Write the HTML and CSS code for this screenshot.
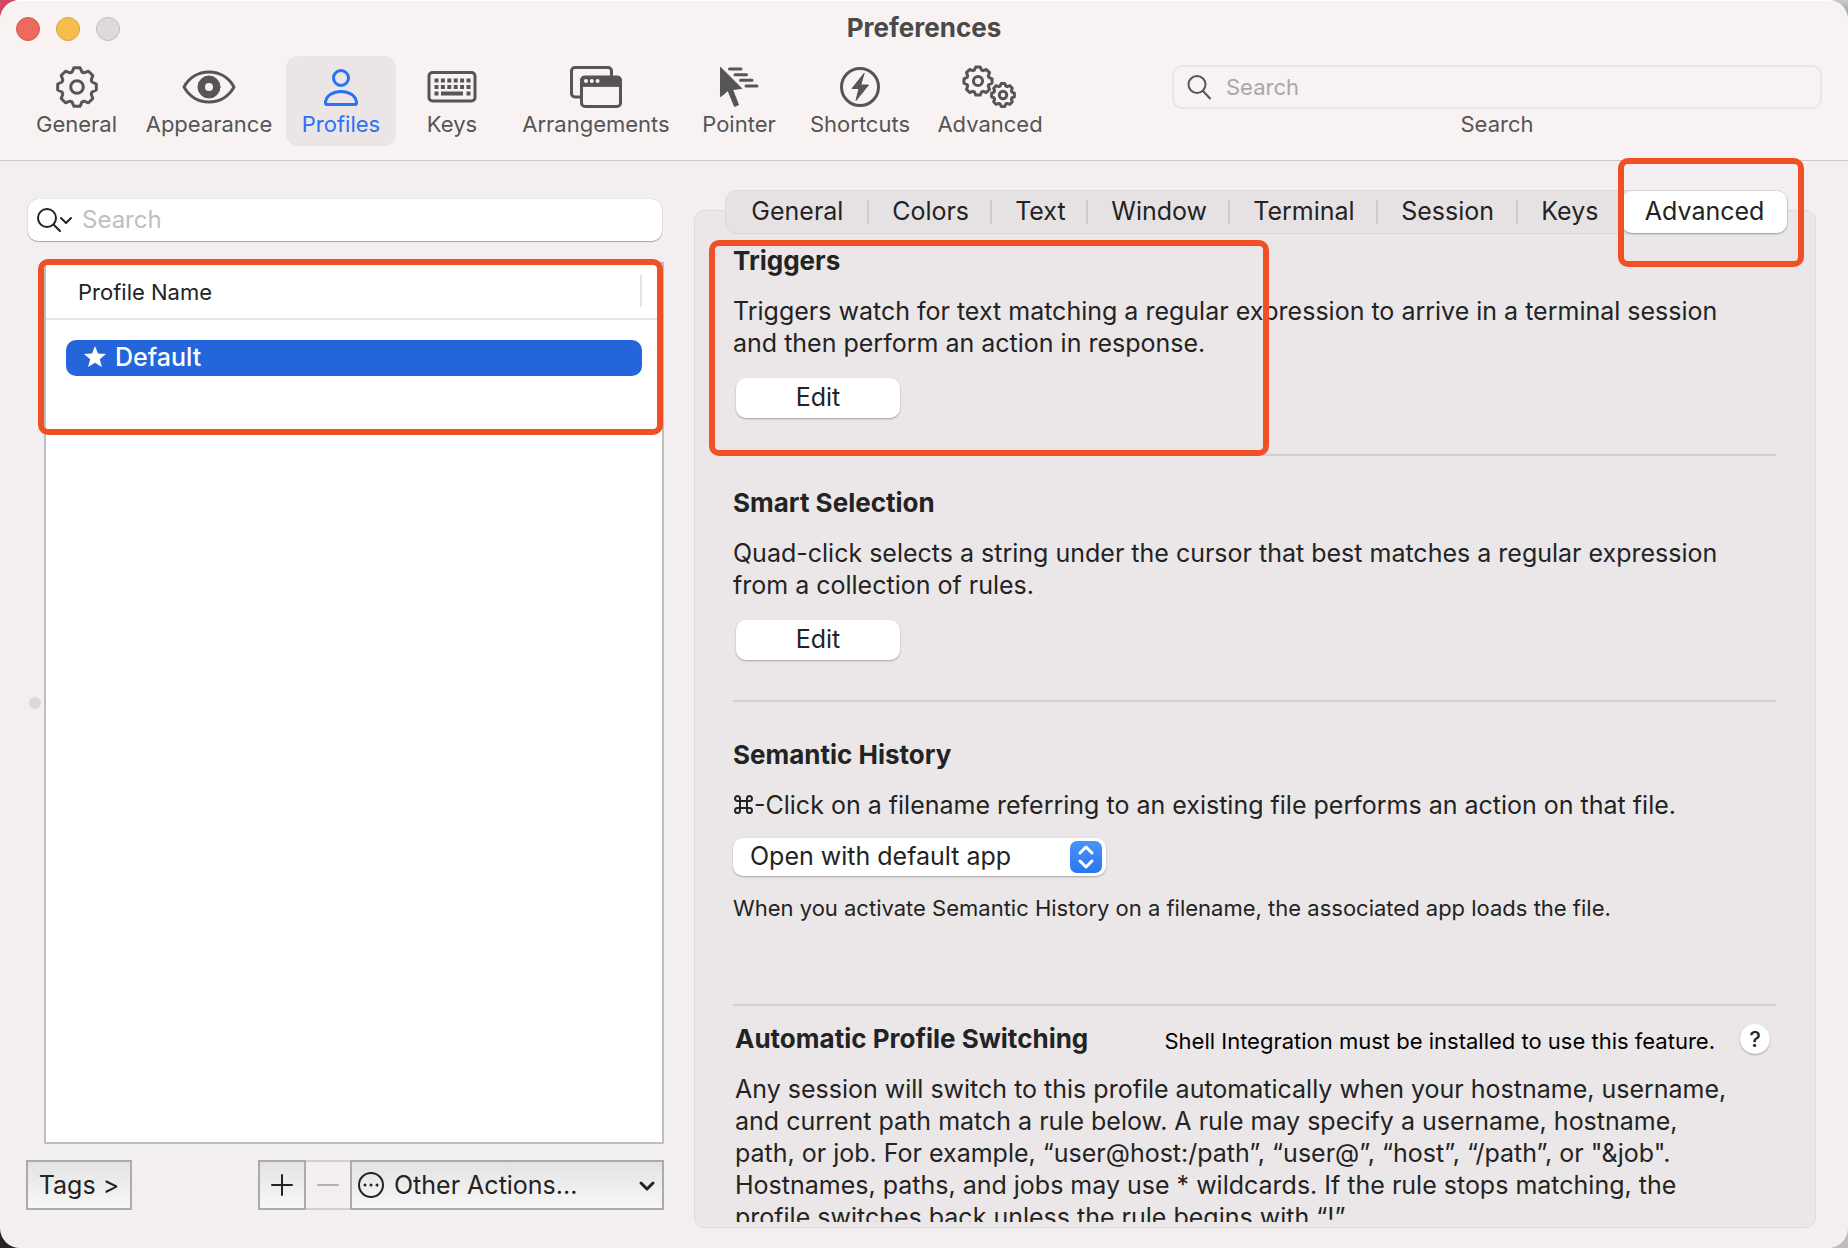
FILE: index.html
```html
<!DOCTYPE html>
<html lang="en">
<head>
<meta charset="utf-8">
<title>Preferences</title>
<link rel="stylesheet" href="styles.css">
</head>
<body>
<svg class="defs" aria-hidden="true">
  <symbol id="gear" viewBox="-22 -22 44 44" overflow="visible">
    <path vector-effect="non-scaling-stroke" d="M-5-15L-3-19.3H3L5-15L7-14.2L11.5-15.8L15.8-11.5L14.2-7L15-5L19.3-3V3L15 5L14.2 7L15.8 11.5L11.5 15.8L7 14.2L5 15L3 19.3H-3L-5 15L-7 14.2L-11.5 15.8L-15.8 11.5L-14.2 7L-15 5L-19.3 3V-3L-15-5L-14.2-7L-15.8-11.5L-11.5-15.8L-7-14.2Z"/>
    <circle vector-effect="non-scaling-stroke" r="6.3"/>
  </symbol>
</svg>
<div class="window">
  <header class="toolbar">
    <div class="titlebar">
      <div class="lights">
        <button class="light close" aria-label="Close"></button>
        <button class="light minimize" aria-label="Minimize"></button>
        <button class="light zoom" aria-label="Zoom" disabled></button>
      </div>
      <h1>Preferences</h1>
    </div>
    <div class="tools">
      <nav class="sections">
        <button class="section">
          <svg class="line" width="44" height="44"><use href="#gear" width="44" height="44"/></svg>
          General
        </button>
        <button class="section">
          <svg class="line" width="56" height="44" viewBox="0 0 56 44"><path d="M3 22C8 13 17 7 28 7s20 6 25 15c-5 9-14 15-25 15S8 31 3 22Z"/><circle class="solid" cx="28" cy="22" r="11"/><circle class="hole" cx="28" cy="22" r="4"/></svg>
          Appearance
        </button>
        <button class="section selected">
          <svg class="line" width="44" height="44" viewBox="0 0 44 44"><circle cx="22" cy="13" r="7.5"/><path d="M8 39.500C6.500 39.500 6.300 38.500 6.500 37C7.500 30.500 14 26.500 22 26.500S36.500 30.500 37.500 37C37.700 38.500 37.500 39.500 36 39.500Z"/></svg>
          Profiles
        </button>
        <button class="section">
          <svg class="line" width="52" height="44" viewBox="0 0 52 44"><rect x="3" y="7.500" width="46" height="28.500" rx="3.500"/><g class="keys"><path d="M8.500 15.500h36M8.500 22h36"/><path class="space" d="M8.500 28.500h4m2.500 0h22m3.500 0h4"/></g></svg>
          Keys
        </button>
        <button class="section">
          <svg class="line" width="54" height="44" viewBox="0 0 54 44"><path d="M11 32H6c-2 0-3.500-1.500-3.500-3.500V6c0-2 1.500-3.500 3.500-3.500h33c2 0 3.500 1.500 3.500 3.500v4"/><rect x="12.500" y="12.500" width="39" height="29" rx="3.500"/><path class="solid" d="M11.500 21v-5.500c0-3 1.500-4.500 4.500-4.500h32c3 0 4.500 1.500 4.500 4.500V21Z"/><g class="hole"><circle cx="17" cy="16" r="2"/><circle cx="22.800" cy="16" r="2"/><circle cx="28.600" cy="16" r="2"/></g></svg>
          Arrangements
        </button>
        <button class="section">
          <svg class="line" width="44" height="44" viewBox="0 0 44 44"><path class="solid" d="M3.800 2.500L24.800 23.500L15.500 24.500L21.500 39.800L17.500 41.500L11 25.500L3.800 31.500Z"/><path d="M12.500 4H24M18 9.700H29.500M23.500 15.300H35M29 21H40"/></svg>
          Pointer
        </button>
        <button class="section">
          <svg class="line" width="44" height="44" viewBox="0 0 44 44"><circle cx="22" cy="22" r="18.500"/><path class="solid" d="M26 8.500L14 23.500H21L18 35.500L30.500 20H23Z"/></svg>
          Shortcuts
        </button>
        <button class="section">
          <svg class="line" width="56" height="44" viewBox="0 0 56 44"><use href="#gear" x="0" y="0" width="32" height="32"/><use href="#gear" x="28" y="17" width="26" height="26"/></svg>
          Advanced
        </button>
      </nav>
      <div class="find">
        <div class="field">
          <svg width="26" height="26" viewBox="0 0 26 26"><circle cx="10" cy="10.500" r="8.500"/><path d="M16 17L23 24.500"/></svg>
          <input id="find" type="search" placeholder="Search">
        </div>
        <label for="find">Search</label>
      </div>
    </div>
  </header>

  <main class="content">
    <aside class="sidebar">
      <div class="filter">
        <svg width="38" height="28" viewBox="0 0 38 28"><circle cx="11" cy="12" r="9"/><path d="M17.500 18.500L24 25M25 12l5 5 5-5"/></svg>
        <input type="search" placeholder="Search" aria-label="Filter profiles">
      </div>
      <div class="list">
        <table>
          <thead><tr><th scope="col">Profile Name</th></tr></thead>
          <tbody><tr><td><div class="profile">
            <svg width="26" height="26" viewBox="0 0 26 26"><path d="M13 2l3 7.500 8 .6-6.200 5.200L19.900 23 13 18.700 6.100 23l2.100-7.700L2 10.100l8-.6Z"/></svg>
            Default
          </div></td></tr></tbody>
        </table>
        <div class="mark mark-list"></div>
        <div class="handle"></div>
      </div>
      <div class="actions">
        <button class="tags">Tags &gt;</button>
        <div class="group">
          <button aria-label="Add profile"><svg width="24" height="24" viewBox="0 0 24 24"><path d="M12 2v20M2 12h20"/></svg></button>
          <button aria-label="Remove profile" disabled><svg width="24" height="24" viewBox="0 0 24 24"><path d="M2 12h20"/></svg></button>
          <div class="other">
            <svg class="more" width="28" height="28" viewBox="0 0 28 28"><circle cx="14" cy="14" r="12"/><path d="M8 14h.01M14 14h.01M20 14h.01"/></svg>
            <select aria-label="Other actions"><option>Other Actions...</option></select>
            <svg class="arrow" width="18" height="14" viewBox="0 0 18 14"><path d="M3 4l6 6 6-6"/></svg>
          </div>
        </div>
      </div>
    </aside>

    <section class="panel">
      <nav class="tabs">
        <button>General</button>
        <button>Colors</button>
        <button>Text</button>
        <button>Window</button>
        <button>Terminal</button>
        <button>Session</button>
        <button>Keys</button>
        <button class="active">Advanced</button>
        <div class="mark mark-tab"></div>
      </nav>
      <div class="settings">
        <section class="block triggers">
          <h2>Triggers</h2>
          <p>Triggers watch for text matching a regular expression to arrive in a terminal session and then perform an action in response.</p>
          <button class="edit">Edit</button>
          <div class="mark mark-triggers"></div>
        </section>
        <section class="block smart">
          <h2>Smart Selection</h2>
          <p>Quad-click selects a string under the cursor that best matches a regular expression from a collection of rules.</p>
          <button class="edit">Edit</button>
        </section>
        <section class="block history">
          <h2>Semantic History</h2>
          <p><svg class="cmd" width="21" height="21" viewBox="0 0 21 21" role="img" aria-label="Command"><path d="M7 7h7v7H7ZM7 7H4.500A2.500 2.500 0 1 1 7 4.500ZM14 7V4.500A2.500 2.500 0 1 1 16.500 7ZM14 14h2.500A2.500 2.500 0 1 1 14 16.500ZM7 14v2.500A2.500 2.500 0 1 1 4.500 14Z"/></svg>-Click on a filename referring to an existing file performs an action on that file.</p>
          <div class="popup">
            <select aria-label="Semantic History action"><option>Open with default app</option></select>
            <svg width="32" height="34" viewBox="0 0 32 34"><defs><linearGradient id="blue" x2="0" y2="1"><stop stop-color="#4a94f8"/><stop offset="1" stop-color="#2a74f2"/></linearGradient></defs><rect width="32" height="32" y="1" rx="7" fill="url(#blue)"/><path d="M10 13l6-6 6 6M10 21l6 6 6-6"/></svg>
          </div>
          <p class="small">When you activate Semantic History on a filename, the associated app loads the file.</p>
        </section>
        <section class="block switching">
          <div class="heading">
            <h2>Automatic Profile Switching</h2>
            <span class="small">Shell Integration must be installed to use this feature.</span>
            <button class="help" aria-label="Help">?</button>
          </div>
          <p>Any session will switch to this profile automatically when your hostname, username, and current path match a rule below. A rule may specify a username, hostname, path, or job. For example, “user@host:/path”, “user@”, “host”, “/path”, or "&amp;job". Hostnames, paths, and jobs may use * wildcards. If the rule stops matching, the profile switches back unless the rule begins with “!”</p>
        </section>
      </div>
    </section>
  </main>
</div>
</body>
</html>
```

FILE: styles.css
```css
* { box-sizing: border-box; }

body {
  margin: 0;
  font: 25px/32px Inter, "Liberation Sans", sans-serif;
  color: #232323;
  background:
    linear-gradient(#d04a62 0 16px, #dcb63c 16px 30px, transparent 30px) left top / 50% 50% no-repeat,
    linear-gradient(#c9c8ca, #77757a) right top / 50% 30px no-repeat,
    linear-gradient(#2b2127, #2b2127) left bottom / 50% 50% no-repeat,
    #bdbbbd;
}

button, input, select {
  margin: 0;
  padding: 0;
  border: 0;
  background: none;
  font: inherit;
  color: inherit;
  outline: 0;
  appearance: none;
}

svg { flex: none; fill: none; stroke: currentColor; stroke-linecap: round; stroke-linejoin: round; }
h1, h2, p { margin: 0; }
h1, h2 { font-size: 26px; font-weight: 700; }

.defs { position: absolute; width: 0; height: 0; }

.window {
  display: flex;
  flex-direction: column;
  height: 100vh;
  overflow: hidden;
  border-radius: 20px;
  background: #f3eff0;
}

/* Toolbar */
.toolbar {
  padding-bottom: 14px;
  border-top: 1px solid #fff;
  border-bottom: 1px solid #cbc7c8;
  background: #f8f2f2;
  color: #555;
}

.titlebar {
  display: grid;
  grid-template-columns: 1fr auto 1fr;
  align-items: center;
  height: 55px;
  padding: 0 16px;
}

.titlebar h1 { padding-bottom: 2px; color: #4b4849; }
.lights { display: flex; gap: 16px; }
.light { width: 24px; height: 24px; border: 1px solid #d9564b; border-radius: 50%; background: #ed6a5e; }
.minimize { border-color: #d9a03c; background: #f5bf4f; }
.zoom { border-color: #bfbbbc; background: #dedadb; }

.tools {
  display: flex;
  justify-content: space-between;
  gap: 40px;
  padding: 0 26px 0 21px;
}

.sections { display: grid; grid-template-columns: 111px 154px 110px 112px 176px 110px 132px 128px; }

.section {
  display: flex;
  flex-direction: column;
  align-items: center;
  gap: 3px;
  height: 90px;
  padding-top: 9px;
  border-radius: 12px;
  font-size: 22px;
  line-height: 24px;
}

.section.selected { background: #ebe5e5; color: #2a72f5; }
.line { stroke-width: 3; }
.solid { fill: currentColor; stroke-width: 1; }
.hole { fill: #f8f2f2; stroke: none; }
.keys { stroke-width: 4; stroke-linecap: butt; stroke-dasharray: 4 2.4; }
.space { stroke-dasharray: none; }

.find {
  flex: 0 1 650px;
  display: flex;
  flex-direction: column;
  gap: 3px;
  padding-top: 9px;
  font-size: 22px;
  line-height: 24px;
  text-align: center;
}

.field {
  display: flex;
  align-items: center;
  gap: 13px;
  height: 44px;
  padding: 0 13px;
  border: 2px solid #eae4e4;
  border-radius: 10px;
}

.field svg { stroke-width: 2; }
.field input { flex: 1; min-width: 0; }
.field input::placeholder { color: #aba6a7; }

/* Body */
.content {
  flex: 1;
  min-height: 0;
  display: grid;
  grid-template-columns: 638fr 1122fr;
  gap: 30px;
  padding: 0 32px 20px 26px;
}

.sidebar { display: flex; flex-direction: column; min-height: 0; padding: 38px 0 18px; }

.filter {
  display: flex;
  align-items: center;
  gap: 8px;
  height: 42px;
  margin: 0 2px 21px;
  padding: 0 8px;
  border-radius: 10px;
  background: #fff;
  box-shadow: 0 1px 1px #aaa6a7, 0 0 1px #aaa6a7;
}

.filter svg { stroke-width: 2; }
.filter input { flex: 1; min-width: 0; font-size: 24px; }
.filter input::placeholder { color: #bfbfbf; }

.list {
  position: relative;
  flex: 1;
  min-height: 0;
  margin-left: 18px;
  border: 2px solid #c0bfc0;
  background: #fff;
}

.list table { width: 100%; border-spacing: 0; }

.list th {
  height: 56px;
  padding: 2px 20px 0 32px;
  border-bottom: 2px solid #e4e4e4;
  background: linear-gradient(#e4e4e4, #e4e4e4) right 20px center / 2px 32px no-repeat;
  font-size: 22px;
  font-weight: 400;
  text-align: left;
}

.list td { padding: 20px 20px 0; }

.profile {
  display: flex;
  align-items: center;
  gap: 7px;
  height: 36px;
  padding: 0 16px 2px;
  border-radius: 10px;
  background: #2565db;
  color: #fff;
  font-weight: 500;
}

.profile svg { fill: currentColor; stroke: none; }

.handle {
  position: absolute;
  left: -17px;
  top: 50%;
  width: 12px;
  height: 12px;
  margin-top: -6px;
  border-radius: 50%;
  background: #dcd8d9;
}

.actions { display: flex; justify-content: space-between; margin-top: 16px; }

.tags, .group button, .other {
  height: 50px;
  border: 2px solid #ababab;
  background: linear-gradient(#e3e3e3, #f7f7f7);
}

.tags { width: 106px; }
.group { display: flex; flex: 0 1 406px; }
.group button { display: grid; place-items: center; width: 48px; }
.group button svg { stroke-width: 2; }
.group button:disabled { width: 44px; border-color: #d2cecf; border-width: 2px 0; background: #f3eff0; color: #b5b1b2; }

.other { position: relative; flex: 1; }
.other select { width: 100%; height: 46px; padding: 0 40px 0 42px; }
.other svg { position: absolute; pointer-events: none; }
.more { left: 5px; top: 9px; stroke-width: 2; }
.more path { stroke-width: 3; }
.arrow { right: 6px; top: 17px; stroke-width: 3; }

/* Profile panel */
.panel {
  display: flex;
  flex-direction: column;
  min-width: 0;
  min-height: 0;
  margin-top: 49px;
  padding: 0 27px 5px 30px;
  border: 1px solid #dfdbdc;
  border-radius: 10px;
  background: #ebe7e8;
}

.tabs {
  position: relative;
  flex: none;
  display: grid;
  grid-template-columns: 143fr 124fr 96fr 142fr 148fr 140fr 105fr 165fr;
  height: 44px;
  margin-top: -21px;
  border: 1px solid #dcd8d9;
  border-radius: 12px;
  background: #e6e2e3;
}

.tabs button { padding-bottom: 2px; background: linear-gradient(#cfcbcc, #cfcbcc) right center / 2px 24px no-repeat; }
.tabs button:nth-child(7) { background: none; }
.tabs .active { border-radius: 10px; background: #fff; box-shadow: 0 1px 2px #999; }

.settings { flex: 1; min-height: 0; margin: 0 12px 0 8px; clip-path: inset(0 -40px); }
.block { position: relative; border-bottom: 2px solid #d3cfd0; }
.block p { margin-top: 18px; padding-right: 40px; }
.block .small { font-size: 22px; }

.triggers { height: 222px; padding-top: 11px; }
.smart { height: 246px; padding-top: 31px; }
.history { height: 304px; padding-top: 37px; }
.switching { padding-top: 17px; border: 0; }

.edit {
  display: block;
  width: 164px;
  height: 40px;
  margin: 19px 0 0 3px;
  padding-bottom: 2px;
  border-radius: 10px;
  background: #fff;
  box-shadow: 0 1px 2px #a5a1a2;
}

.cmd { stroke-width: 2; vertical-align: -1px; }

.popup { position: relative; width: 373px; margin-top: 17px; }
.popup select { display: block; width: 100%; height: 38px; padding: 0 48px 2px 17px; border-radius: 10px; background: #fff; box-shadow: 0 1px 2px #a5a1a2; }
.popup svg { position: absolute; right: 4px; top: 2px; stroke: #fff; stroke-width: 3; pointer-events: none; }
.popup rect { stroke: none; }
.history .small { margin-top: 16px; }

.heading { display: flex; align-items: center; height: 32px; padding: 0 6px 0 2px; }
.heading .small { margin-left: auto; padding-top: 4px; color: #000; }
.help { width: 30px; height: 30px; margin-left: 25px; border-radius: 50%; background: #fff; box-shadow: 0 1px 2px #a5a1a2; font-size: 22px; font-weight: 500; line-height: 30px; }
.switching p { padding-left: 2px; }

/* Highlight frames */
.mark { position: absolute; border: 6px solid #f05023; border-radius: 10px; pointer-events: none; }
.mark-list { left: -8px; right: -1px; top: -5px; height: 176px; }
.mark-tab { right: -17px; top: -33px; width: 186px; height: 109px; }
.mark-triggers { left: -24px; top: 6px; width: 560px; height: 216px; }
```
